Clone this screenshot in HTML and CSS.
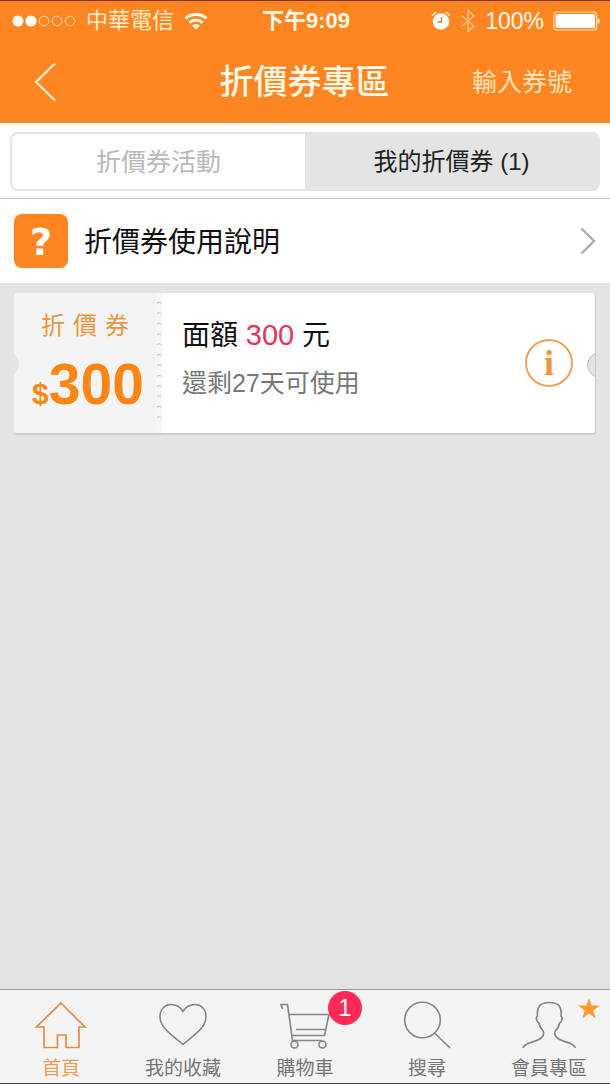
FILE: index.html
```html
<!DOCTYPE html>
<html lang="zh-Hant">
<head>
<meta charset="utf-8">
<meta name="viewport" content="width=device-width, initial-scale=1">
<title>折價券專區</title>
<link rel="stylesheet" href="styles.css">
</head>
<body>
<div class="app">
  <div class="top">
    <div class="status">
      <div class="status-left">
        <svg class="signal" width="64" height="12" viewBox="0 0 64 12" aria-hidden="true">
          <g fill="#fff"><circle cx="6" cy="6" r="5.5"/><circle cx="19" cy="6" r="5.5"/></g>
          <g fill="none" stroke="#ffdcb0" stroke-width="1"><circle cx="32" cy="6" r="4.8"/><circle cx="45" cy="6" r="4.8"/><circle cx="58" cy="6" r="4.8"/></g>
        </svg>
        <span class="carrier">中華電信</span>
        <svg width="24" height="18" viewBox="0 0 24 18" aria-hidden="true">
          <g fill="none" stroke="#fffbe8" stroke-width="2.8"><path d="M1.5 6.6A15.5 15.5 0 0 1 22.5 6.6"/><path d="M5.3 10.6A10 10 0 0 1 18.7 10.6"/></g>
          <path d="M8 13.5A6 6 0 0 1 16 13.5L12 17.5Z" fill="#fffbe8"/>
        </svg>
      </div>
      <span class="time">下午9:09</span>
      <div class="status-right">
        <svg width="20" height="20" viewBox="0 0 20 20" aria-hidden="true">
          <circle cx="10" cy="10.5" r="8.3" fill="#fff"/>
          <path d="M10.5 6v5H6.5" fill="none" stroke="#c9783a" stroke-width="1.3"/>
          <path d="M1.2 5Q2.5 2 5.500 1.200M14.500 1.200Q17.500 2 18.800 5" fill="none" stroke="#ffe6c4" stroke-width="1.6"/>
        </svg>
        <svg width="16" height="24" viewBox="0 0 16 24" aria-hidden="true">
          <path d="M1.500 6.500L14 17L8 22.500V1.500L14 7L1.500 17.500" fill="none" stroke="#ffc184" stroke-width="1.5"/>
        </svg>
        <span class="percent">100%</span>
        <svg width="47" height="20" viewBox="0 0 47 20" aria-hidden="true">
          <rect x=".7" y="1" width="43" height="18" rx="3" fill="none" stroke="#ffdfae" stroke-width="1.2"/>
          <rect x="2.500" y="3" width="39.500" height="14" rx="1.500" fill="#fff"/>
          <path d="M44.500 7Q47 8 47 10T44.500 13Z" fill="#ffe9c8"/>
        </svg>
      </div>
    </div>
    <header class="nav">
      <button class="back" type="button" aria-label="返回">
        <svg width="24" height="40" viewBox="0 0 24 40"><path d="M22 1.500L3 20L22 38.500" fill="none" stroke="#ffefcf" stroke-width="2.3"/></svg>
      </button>
      <h1 class="title">折價券專區</h1>
      <button class="enter" type="button">輸入券號</button>
    </header>
  </div>

  <div class="tabs">
    <div class="segments">
      <button class="segment" type="button">折價券活動</button>
      <button class="segment is-active" type="button">我的折價券 (1)</button>
    </div>
  </div>

  <a class="help" href="#help">
    <span class="help-icon" aria-hidden="true">?</span>
    <span class="help-text">折價券使用說明</span>
    <svg width="16" height="28" viewBox="0 0 16 28" aria-hidden="true"><path d="M1.500 1.500L14 14L1.500 26.500" fill="none" stroke="#ababab" stroke-width="2.4"/></svg>
  </a>

  <main class="content">
    <article class="coupon">
      <div class="stub">
        <span class="stub-label"><span>折</span><span>價</span><span>券</span></span>
        <span class="stub-value"><span class="currency">$</span>300</span>
      </div>
      <svg class="perforation" width="6" height="141" viewBox="0 0 6 141" aria-hidden="true">
        <rect width="6" height="141" fill="#f7f7f7"/>
        <path d="M1 10.500q2-2.500 4 0M1 21q2-2.500 4 0M1 31.500q2-2.500 4 0M1 42q2-2.500 4 0M1 52q2-2.500 4 0M1 62.500q2-2.500 4 0M1 73q2-2.500 4 0M1 83.500q2-2.500 4 0M1 94q2-2.500 4 0M1 104q2-2.500 4 0M1 114.500q2-2.500 4 0M1 125q2-2.500 4 0" fill="none" stroke="#c6c6c6" stroke-width="1.2"/>
      </svg>
      <div class="detail">
        <div class="detail-text">
          <h2 class="amount">面額 <span class="red">300</span> 元</h2>
          <p class="expiry">還剩27天可使用</p>
        </div>
        <button class="info" type="button" aria-label="折價券資訊">i</button>
      </div>
    </article>
  </main>

  <nav class="tabbar">
    <a class="tab is-current" href="#home">
      <svg width="54" height="50" viewBox="0 0 54 50"><path d="M27 2L51 26H45V46.500H32V34H23.500V46.500H10V26H2.500Z" fill="none" stroke="#e58b42" stroke-width="1.7"/></svg>
      <span>首頁</span>
    </a>
    <a class="tab" href="#favorites">
      <svg width="54" height="50" viewBox="0 0 54 50"><path d="M27 43.500C19 36 4 28 4 15.500C4 8 9 3.500 15 3.500C21 3.500 25 7 27 10.500C29 7 33 3.500 39 3.500C45 3.500 50 8 50 15.500C50 28 35 36 27 43.500Z" fill="none" stroke="#858585" stroke-width="1.6"/></svg>
      <span>我的收藏</span>
    </a>
    <a class="tab" href="#cart">
      <span class="cart">
        <svg width="54" height="50" viewBox="0 0 54 50"><g fill="none" stroke="#858585" stroke-width="1.6"><path d="M4.500 8L3 3.500H9.500L14.500 39.500H44M11 13.500H51L46.500 34.500H14.500M18 28.500H48"/><circle cx="16.500" cy="43.500" r="3.500"/><circle cx="44.500" cy="43.500" r="3.500"/></g></svg>
        <span class="badge">1</span>
      </span>
      <span>購物車</span>
    </a>
    <a class="tab" href="#search">
      <svg width="54" height="50" viewBox="0 0 54 50"><g fill="none" stroke="#858585" stroke-width="1.6"><circle cx="22.500" cy="19" r="17.800"/><path d="M34.500 32L50 47"/></g></svg>
      <span>搜尋</span>
    </a>
    <a class="tab" href="#member">
      <span class="member">
        <svg width="54" height="50" viewBox="0 0 54 50"><path d="M1 47C4 40 12 42.500 18.500 37.500C22 35 22 32 21 29.500C18.500 27.500 17.500 25 17 22C14.500 21 13.500 16 15.500 15C14.500 6 18 1.500 27.500 1.500C37 1.500 40 6 39 15C41 16 40 21 37.500 22C37 25 36 27.500 33.500 29.500C32.500 32 32.500 35 36 37.500C42.500 42.500 50.500 40 53.500 47" fill="none" stroke="#858585" stroke-width="1.6"/></svg>
        <svg class="star" width="22" height="21" viewBox="0 0 22 21"><path d="M11 0L13.600 7.600H22L15.300 12.400L17.800 20.500L11 15.600L4.200 20.500L6.700 12.400L0 7.600H8.400Z" fill="#ff9a2e"/></svg>
      </span>
      <span>會員專區</span>
    </a>
  </nav>
</div>
</body>
</html>
```
FILE: styles.css
```css
* { box-sizing: border-box; }

body {
  margin: 0;
  font-family: "Liberation Sans", "Noto Sans CJK TC", sans-serif;
  color: #111;
  background: #e4e4e4;
}

button {
  padding: 0;
  border: 0;
  background: none;
  color: inherit;
  font: inherit;
  cursor: pointer;
}

a { color: inherit; text-decoration: none; }
h1, h2, p { margin: 0; font-weight: 400; }
svg { display: block; flex: none; }

.app {
  display: flex;
  flex-direction: column;
  min-height: 100vh;
  border-bottom: 1px solid #4c484c;
}

.top {
  border-top: 1px solid #7c3437;
  background: #fd8622;
  color: #fff8e4;
}

.status {
  display: grid;
  grid-template-columns: 1fr auto 1fr;
  align-items: center;
  height: 40px;
  padding: 0 10px 0 12px;
}

.status-left, .status-right { display: flex; align-items: center; }
.status-left { gap: 10px; }
.status-right { justify-content: flex-end; gap: 9px; }
.carrier, .time, .percent { font-size: 22px; line-height: 32px; }
.carrier { color: #ffedcb; }
.time { font-weight: 700; }
.percent { font-size: 23px; }

.nav {
  display: grid;
  grid-template-columns: 1fr auto 1fr;
  align-items: center;
  height: 82px;
  padding: 0 38px 0 33px;
}

.back { justify-self: start; }
.title { padding-left: 4px; font-size: 34px; font-weight: 500; line-height: 48px; }
.enter { justify-self: end; font-size: 25px; line-height: 36px; color: #ffe3ba; }

.tabs {
  padding: 9px 10px 7px;
  border-bottom: 1px solid #c8c8c8;
  background: #fff;
}

.segments {
  display: grid;
  grid-template-columns: 1fr 1fr;
  height: 59px;
  overflow: hidden;
  border: 2px solid #e4e4e4;
  border-radius: 8px;
}

.segment { font-size: 25px; line-height: 36px; color: #b9b9b9; }
.segment.is-active { background: #e4e4e4; color: #222; font-size: 24px; }

.help {
  display: flex;
  align-items: center;
  gap: 16px;
  height: 84px;
  padding: 0 14px;
  background: #fff;
}

.help-icon {
  width: 54px;
  height: 54px;
  border-radius: 8px;
  background: #fd8622;
  color: #fff;
  font: 700 38px/56px "DejaVu Sans", sans-serif;
  text-align: center;
}

.help-text { flex: 1; padding-top: 3px; font-size: 28px; line-height: 42px; }

.content { flex: 1; padding: 10px 14px; }

.coupon {
  position: relative;
  display: flex;
  height: 142px;
  overflow: hidden;
  border-radius: 4px;
  background: #fff;
  border-right: 1px solid #c8c8c8;
  border-bottom: 2px solid #cdcdcd;
}

.coupon::before, .coupon::after {
  content: "";
  position: absolute;
  top: 59px;
  width: 24px;
  height: 24px;
  border-radius: 50%;
  background: #e4e4e4;
}

.coupon::before { left: -19px; }
.coupon::after { right: -18px; border: 1px solid #c0c0c0; }

.stub {
  display: flex;
  flex-direction: column;
  align-items: center;
  width: 142px;
  padding: 15px 0 0;
  background: #f4f4f4;
  color: #fa8614;
}

.stub-label { display: flex; gap: 8px; font-size: 24px; line-height: 36px; color: #e89742; }
.stub-value { padding-left: 6px; font-size: 57px; font-weight: 700; line-height: 80px; }
.currency { font-size: 30px; }

.detail {
  display: flex;
  flex: 1;
  align-items: center;
  justify-content: space-between;
  padding: 0 22px 0 20px;
}

.amount { font-size: 28px; line-height: 42px; }
.red { font-size: 29px; color: #e0365f; }
.expiry { padding: 8px 0 12px; font-size: 25px; line-height: 36px; color: #777; }

.info {
  width: 48px;
  height: 48px;
  border: 2px solid #eba257;
  border-radius: 50%;
  color: #e99645;
  font: 700 36px/44px "Liberation Serif", serif;
}

.tabbar {
  display: grid;
  grid-template-columns: repeat(5, 1fr);
  border-top: 1px solid #9b9b9b;
  background: #f4f4f4;
}

.tab {
  display: flex;
  flex-direction: column;
  align-items: center;
  gap: 4px;
  padding-top: 11px;
  font-size: 19px;
  line-height: 28px;
  color: #757575;
}

.tab.is-current { color: #ee9a51; }
.cart, .member { position: relative; }

.badge {
  position: absolute;
  top: -10px;
  right: -30px;
  width: 34px;
  height: 34px;
  border-radius: 50%;
  background: #ff2a55;
  color: #fff;
  font-size: 24px;
  line-height: 34px;
  text-align: center;
}

.star { position: absolute; top: -3px; right: -24px; }
```
